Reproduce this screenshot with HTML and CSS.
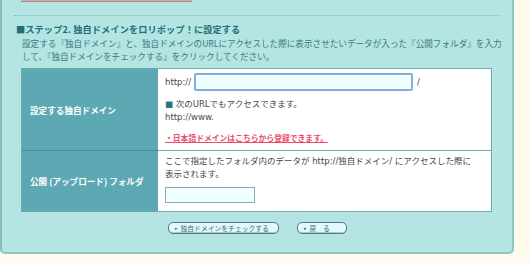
FILE: index.html
```html
<!DOCTYPE html>
<html lang="ja">
<head>
<meta charset="utf-8">
<link rel="stylesheet" href="styles.css">
</head>
<body>
<div class="panel">
  <div class="pinkbar"></div>
  <div class="dots"></div>
  <h2 class="heading">■ステップ2. 独自ドメインをロリポップ！に設定する</h2>
  <p class="desc">設定する『独自ドメイン』と、独自ドメインのURLにアクセスした際に表示させたいデータが入った『公開フォルダ』を入力して、『独自ドメインをチェックする』をクリックしてください。</p>
  <div class="table">
    <div class="row row1">
      <div class="label">設定する独自ドメイン</div>
      <div class="cell">
        <div class="urlline"><span>http://</span><span class="bigin"></span><span class="slash">/</span></div>
        <div class="note"><span class="sq">■</span> 次のURLでもアクセスできます。</div>
        <div class="note">http://www.</div>
        <a class="jplink">・日本語ドメインはこちらから登録できます。</a>
      </div>
    </div>
    <div class="row row2">
      <div class="label">公開 (アップロード) フォルダ</div>
      <div class="cell">
        <div class="note2">ここで指定したフォルダ内のデータが http://独自ドメイン/ にアクセスした際に<br>表示されます。</div>
        <div class="smallin"></div>
      </div>
    </div>
  </div>
  <div class="buttons">
    <span class="btn btn-check"><span class="tri">▸</span>独自ドメインをチェックする</span>
    <span class="btn btn-back"><span class="tri">▸</span>戻　る</span>
  </div>
</div>
</body>
</html>
```

FILE: styles.css
```css
html, body {
  margin: 0;
  padding: 0;
}
body {
  background: #fffbec;
  font-family: "Noto Sans CJK JP", "DejaVu Sans", sans-serif;
  width: 530px;
  height: 263px;
  overflow: hidden;
}
.panel {
  box-sizing: border-box;
  width: 514px;
  height: 254px;
  background: #b4e5e2;
  border: 2px solid #8ec7c2;
  border-left-color: #86bdb8;
  border-top: none;
  border-radius: 0 0 5px 5px;
  display: flex;
  flex-direction: column;
}
.pinkbar {
  margin-left: 19px;
  width: 171px;
  height: 2px;
  background: #d8a6ab;
  border-bottom: 1px solid #b08890;
  box-sizing: border-box;
}
.dots {
  margin: 13px 0 0 12px;
  width: 486px;
  border-top: 1px dotted #86bdb9;
}
.heading {
  margin: 6px 0 0 14px;
  font-size: 9.2px;
  line-height: 14px;
  font-weight: bold;
  color: #206d7b;
  letter-spacing: 0.1px;
}
.desc {
  margin: 1px 0 0 20px;
  width: 484px;
  font-size: 8.6px;
  line-height: 13px;
  color: #3b7a80;
}
.table {
  margin: 5px 0 0 19px;
  width: 471px;
  border: 1px solid #6fa9ae;
  box-sizing: border-box;
  background: #fff;
  display: flex;
  flex-direction: column;
}
.row {
  display: flex;
}
.row1 {
  height: 81px;
  border-bottom: 1px solid #6fa9ae;
}
.row2 {
  height: 60px;
}
.label {
  width: 136px;
  background: #5ca8b3;
  color: #fff;
  font-weight: bold;
  font-size: 8.6px;
  display: flex;
  align-items: center;
  padding-left: 8px;
  box-sizing: border-box;
}
.row1 .label {
  border-bottom: 1px solid #3f8c97;
  margin-bottom: -1px;
}
.cell {
  flex: 1;
  padding-left: 7px;
  font-family: "DejaVu Sans", "Noto Sans CJK JP", sans-serif;
  font-size: 8.5px;
  color: #474747;
}
.row1 .cell {
  padding-top: 4px;
}
.urlline {
  display: flex;
  align-items: center;
  height: 18px;
  gap: 3px;
}
.bigin {
  display: block;
  width: 219px;
  height: 18px;
  box-sizing: border-box;
  background: #effeff;
  border: 2px solid #7fb1e0;
  border-radius: 2px;
}
.slash {
  margin-left: 1px;
}
.note {
  line-height: 12.5px;
}
.urlline + .note {
  margin-top: 7px;
}
.sq {
  color: #2a7482;
}
.jplink {
  display: inline-block;
  margin-top: 9px;
  font-family: "Noto Sans CJK JP", sans-serif;
  font-size: 7.8px;
  color: #ea4d6c;
  text-decoration: underline;
  font-weight: bold;
}
.row2 .cell {
  padding-top: 4px;
}
.note2 {
  line-height: 13px;
  white-space: nowrap;
}
.smallin {
  margin-top: 6px;
  width: 90px;
  height: 16px;
  box-sizing: border-box;
  background: #effeff;
  border: 1px solid #88aeb3;
}
.buttons {
  margin-top: 10px;
  display: flex;
  gap: 18px;
  padding-left: 166px;
}
.btn {
  box-sizing: border-box;
  flex: none;
  height: 12px;
  border: 1px solid #4f7b85;
  border-radius: 5px;
  background: #e2f9fb;
  box-shadow: inset 0 -1px 0 #a9ccd0;
  font-size: 6.8px;
  line-height: 10px;
  color: #3d6b74;
  display: flex;
  align-items: center;
  padding-left: 6px;
}
.btn-check {
  width: 111px;
}
.btn-back {
  width: 50px;
}
.tri {
  font-size: 5px;
  margin-right: 3px;
}
```
